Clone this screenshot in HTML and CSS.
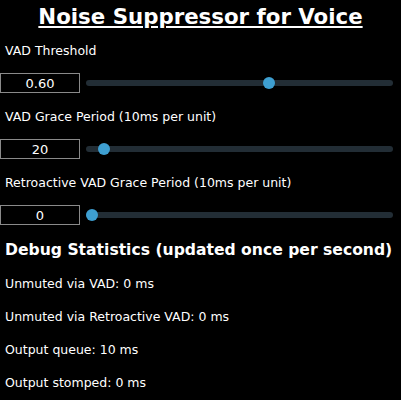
FILE: index.html
```html
<!DOCTYPE html>
<html lang="en">
<head>
    <meta charset="UTF-8">
    <title>Noise Suppressor for Voice</title>
    <link rel="stylesheet" href="styles.css">
</head>
<body>
    <h1>Noise Suppressor for Voice</h1>

    <div class="setting">
        <label for="vad-threshold">VAD Threshold</label>
        <div class="row">
            <input type="text" class="value" value="0.60">
            <input type="range" id="vad-threshold" min="0" max="1" step="0.01" value="0.60">
        </div>
    </div>

    <div class="setting">
        <label for="vad-grace">VAD Grace Period (10ms per unit)</label>
        <div class="row">
            <input type="text" class="value" value="20">
            <input type="range" id="vad-grace" min="0" max="500" value="20">
        </div>
    </div>

    <div class="setting">
        <label for="retro-grace">Retroactive VAD Grace Period (10ms per unit)</label>
        <div class="row">
            <input type="text" class="value" value="0">
            <input type="range" id="retro-grace" min="0" max="500" value="0">
        </div>
    </div>

    <h2>Debug Statistics (updated once per second)</h2>
    <p class="stat">Unmuted via VAD: 0 ms</p>
    <p class="stat">Unmuted via Retroactive VAD: 0 ms</p>
    <p class="stat">Output queue: 10 ms</p>
    <p class="stat">Output stomped: 0 ms</p>
</body>
</html>
```

FILE: styles.css
```css
body {
    margin: 0;
    background-color: #000;
    color: #fff;
    font-family: "DejaVu Sans", Verdana, sans-serif;
    font-size: 12.5px;
}
h1 {
    margin: 0;
    padding-top: 4px;
    height: 35px;
    box-sizing: border-box;
    text-align: center;
    font-size: 21.3px;
    line-height: 26px;
    text-decoration: underline;
}
.setting {
    height: 66px;
}
.setting label {
    display: block;
    height: 38px;
    padding-left: 5px;
    padding-top: 8px;
    line-height: 15px;
    box-sizing: border-box;
}
.row {
    display: flex;
    align-items: center;
    gap: 6px;
}
.value {
    width: 80px;
    height: 20px;
    box-sizing: border-box;
    margin: 0;
    padding: 0;
    border: 1px solid #8a8a8a;
    background: #000;
    color: #fff;
    font: inherit;
    font-size: 13px;
    text-align: center;
}
input[type="range"] {
    -webkit-appearance: none;
    appearance: none;
    flex: 1;
    margin: 0 8px 0 0;
    height: 20px;
    background: transparent;
}
input[type="range"]::-webkit-slider-runnable-track {
    height: 6px;
    border-radius: 3px;
    background: #222d35;
}
input[type="range"]::-webkit-slider-thumb {
    -webkit-appearance: none;
    width: 12px;
    height: 12px;
    margin-top: -3px;
    border-radius: 50%;
    background: #3e9fd1;
    border: none;
}
h2 {
    margin: 0;
    padding: 7px 0 0 5px;
    height: 43px;
    box-sizing: border-box;
    font-size: 15.6px;
    line-height: 20px;
    white-space: nowrap;
}
.stat {
    margin: 0;
    padding-left: 5px;
    height: 33px;
    line-height: 15px;
}
```
